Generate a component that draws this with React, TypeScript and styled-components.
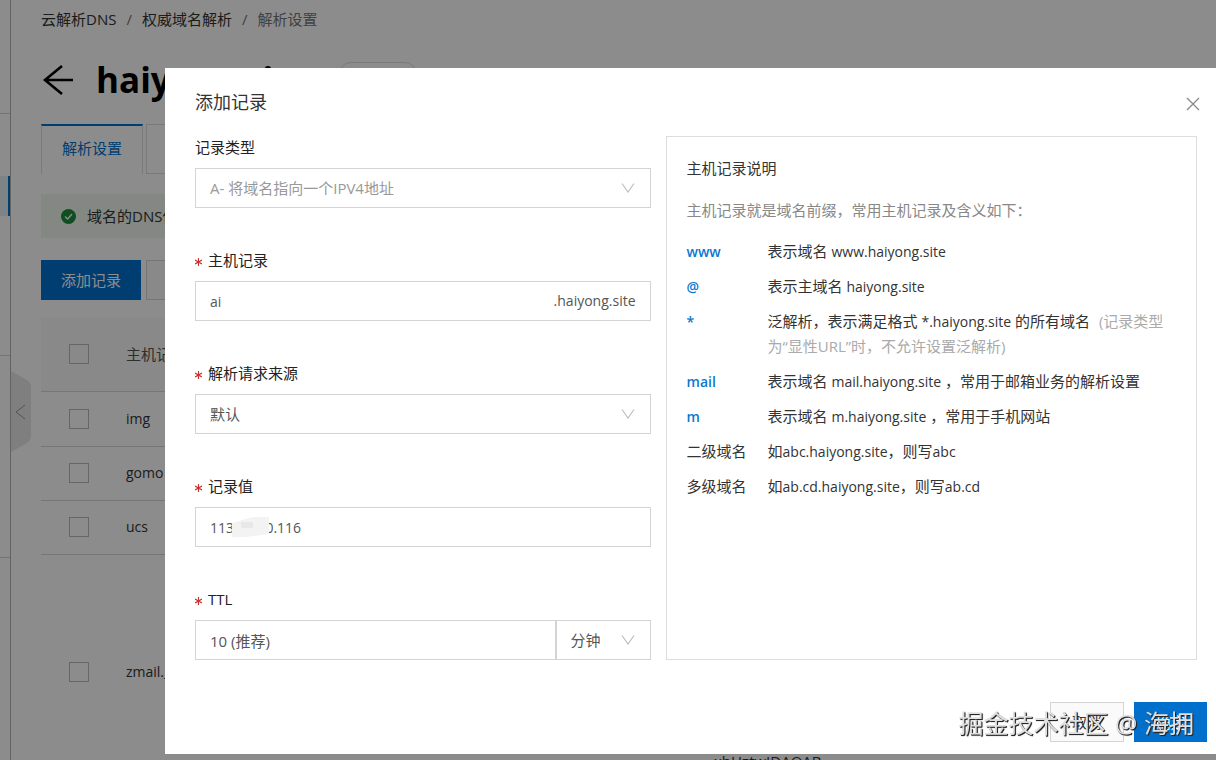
import React from "react";
import styled, { createGlobalStyle } from "styled-components";

const Global = createGlobalStyle`
  *, *::before, *::after { box-sizing: border-box; }
  html, body, #root { height: 100%; }
  body {
    margin: 0;
    overflow: hidden;
    font-family: "Open Sans", "Noto Sans CJK SC", sans-serif;
    font-size: 15px;
    line-height: 24px;
    color: #333;
    background: #fff;
  }
  button, input, select { font: inherit; color: inherit; margin: 0; border-radius: 0; }
  h1, h2, h3, p, dl, dd, dt, ol { margin: 0; padding: 0; font-weight: 400; }
`;

const Shell = styled.div`
  display: flex;
  height: 100%;
  overflow: hidden;
`;

const Rail = styled.nav`
  display: flex;
  flex-direction: column;
  flex: none;
  width: 11px;
  border-right: 1px solid #b4b4b4;
`;

const RailGroup = styled.div<{ $h: number }>`
  flex: none;
  height: ${(p) => p.$h}px;
  padding-top: 62px;
  border-bottom: 1px solid #d4d4d4;
`;

const RailActive = styled.div`
  height: 40px;
  background: #e6eff5;
  border-right: 2px solid #0070cc;
`;

const Collapse = styled.button`
  position: absolute;
  left: 11px;
  top: 371px;
  width: 20px;
  height: 81px;
  padding: 0;
  border: 0;
  background: none;
  svg { display: block; }
`;

const Page = styled.main`
  flex: 1;
  min-width: 0;
  padding: 7px 24px 0 30px;
`;

const Crumbs = styled.ol`
  display: flex;
  gap: 10px;
  list-style: none;
  color: #777;
  a { color: #333; text-decoration: none; }
`;

const TitleRow = styled.header`
  display: flex;
  align-items: center;
  gap: 20px;
  height: 93px;
  padding-top: 5px;
  color: #000;
`;

const Back = styled.button`
  padding: 0;
  border: 0;
  background: none;
  width: 35px;
  svg { display: block; }
`;

const Title = styled.h1`
  font-size: 35px;
  font-weight: 700;
  line-height: 48px;
`;

const Pill = styled.span`
  margin-left: 10px;
  width: 78px;
  height: 36px;
  border: 1px solid #ddd;
  border-radius: 12px;
`;

const Tabs = styled.div`
  display: flex;
  gap: 3px;
`;

const Tab = styled.button<{ $on?: boolean }>`
  width: 102px;
  height: 50px;
  padding: 0 0 4px;
  background: #fff;
  border: 1px solid #dedede;
  ${(p) => p.$on && "border-top: 2px solid #0070cc; border-bottom: 0; color: #0070cc;"}
`;

const Notice = styled.div`
  display: flex;
  align-items: center;
  gap: 11px;
  height: 44px;
  margin-top: 20px;
  padding-left: 20px;
  background: #eef7ee;
`;

const Actions = styled.div`
  display: flex;
  gap: 5px;
  margin: 22px 0 17px;
`;

const Button = styled.button<{ $primary?: boolean; $w: number }>`
  width: ${(p) => p.$w}px;
  height: 40px;
  padding: 0;
  border: 1px solid ${(p) => (p.$primary ? "#0070cc" : "#d4d4d4")};
  background: ${(p) => (p.$primary ? "#0070cc" : "#fafafa")};
  color: ${(p) => (p.$primary ? "#fff" : "#333")};
`;

const Records = styled.table`
  width: 100%;
  border-collapse: collapse;
  table-layout: fixed;
  th { background: #f9f9f9; font-weight: 400; text-align: left; color: #555; }
  th, td { padding: 0; border-bottom: 1px solid #d8d8d8; }
`;

const CheckCol = styled.col`
  width: 85px;
`;

const NameCol = styled.col`
  width: 588px;
`;

const Row = styled.tr<{ $h: number }>`
  height: ${(p) => p.$h}px;
`;

const NameCell = styled.td`
  font-size: 14px;
`;

const ValueCell = styled.td`
  vertical-align: bottom;
`;

const KeyTail = styled.span`
  display: block;
  padding-bottom: 16px;
`;

const Tick = styled.input`
  appearance: none;
  display: block;
  width: 20px;
  height: 20px;
  margin: 0 0 0 28px;
  border: 1px solid #bbb;
`;

const Mask = styled.div`
  position: fixed;
  inset: 0;
  background: rgba(0, 0, 0, 0.45);
`;

const Dialog = styled.section`
  position: fixed;
  top: 68px;
  left: 165px;
  right: 0;
  padding: 22px 9px 12px 30px;
  background: #fff;
`;

const DialogHead = styled.header`
  display: flex;
  justify-content: space-between;
  align-items: center;
  height: 24px;
  margin-bottom: 22px;
  h2 { font-size: 18px; }
`;

const Close = styled.button`
  padding: 3px 7px 0 0;
  border: 0;
  background: none;
  svg { display: block; }
`;

const Columns = styled.div`
  display: grid;
  grid-template-columns: minmax(0, 6fr) minmax(0, 7fr);
  gap: 15px;
  padding-right: 10px;
`;

const Form = styled.form`
  display: flex;
  flex-direction: column;
  gap: 41px;
`;

const Field = styled.div`
  display: flex;
  flex-direction: column;
  gap: 10px;
`;

const Label = styled.label`
  display: flex;
  align-items: center;
  gap: 6px;
  height: 22px;
  line-height: 22px;
  color: #222;
`;

const Star = styled.span`
  display: flex;
  width: 7px;
  padding-top: 4px;
`;

const Box = styled.div<{ $muted?: boolean; $latin?: boolean }>`
  position: relative;
  display: flex;
  align-items: center;
  height: 40px;
  border: 1px solid #d4d4d4;
  font-size: ${(p) => (p.$latin ? 14 : 15)}px;
  color: ${(p) => (p.$muted ? "#999" : "#555")};
  input, select {
    flex: 1;
    min-width: 0;
    width: 100%;
    height: 38px;
    padding: 0 14px;
    border: 0;
    outline: 0;
    background: none;
    appearance: none;
    opacity: 1;
  }
  > svg { position: absolute; right: 15px; pointer-events: none; }
`;

const Suffix = styled.span`
  padding-right: 14px;
`;

const Smudge = styled.svg`
  && { left: 35px; right: auto; top: 8px; }
`;

const Split = styled.div`
  display: grid;
  grid-template-columns: 1fr 95px;
`;

const Help = styled.aside`
  padding: 19px 20px;
  border: 1px solid #ddd;
  h3 { font-size: 15px; }
`;

const Intro = styled.p`
  margin: 18px 0 17px;
  color: #888;
`;

const Terms = styled.dl`
  display: grid;
  grid-template-columns: 81px 1fr;
  row-gap: 10px;
  line-height: 25px;
`;

const Term = styled.dt<{ $code?: boolean }>`
  ${(p) => p.$code && "color: #0a78d0; font-size: 14px; font-weight: 600;"}
`;

const Host = styled.span`
  font-size: 14px;
`;

const Hint = styled.span`
  color: #aaa;
  margin-left: 5px;
`;

const Foot = styled.footer`
  display: flex;
  justify-content: flex-end;
  gap: 10px;
  margin-top: 42px;
`;

const Watermark = styled.div`
  position: fixed;
  right: 22px;
  bottom: 19px;
  font-size: 25px;
  line-height: 36px;
  white-space: nowrap;
  color: #e0e0e0;
  text-shadow: 1px 1px 1px #222, 1px 1px 0 #444;
  pointer-events: none;
`;

const Chevron = () => (
  <svg width="14" height="10" viewBox="0 0 14 10" fill="none" stroke="#bbb" strokeWidth="1.1" aria-hidden="true">
    <path d="M1 0.5 7 9 13 0.5" />
  </svg>
);

const Required = () => (
  <Star aria-hidden="true">
    <svg width="7" height="8" viewBox="0 0 7 8" stroke="#c9302c" strokeWidth="1.1">
      <path d="M3.5 0V8M0 2 7 6M0 6 7 2" />
    </svg>
  </Star>
);

const terms: { term: string; code?: boolean; text: React.ReactNode }[] = [
  { term: "www", code: true, text: <>表示域名 <Host>www.haiyong.site</Host></> },
  { term: "@", code: true, text: <>表示主域名 <Host>haiyong.site</Host></> },
  {
    term: "*",
    code: true,
    text: (
      <>
        泛解析，表示满足格式 <Host>*.haiyong.site</Host> 的所有域名 <Hint>(记录类型为“显性URL”时，不允许设置泛解析)</Hint>
      </>
    ),
  },
  { term: "mail", code: true, text: <>表示域名 <Host>mail.haiyong.site</Host> ，常用于邮箱业务的解析设置</> },
  { term: "m", code: true, text: <>表示域名 <Host>m.haiyong.site</Host> ，常用于手机网站</> },
  { term: "二级域名", text: <>如<Host>abc.haiyong.site</Host>，则写<Host>abc</Host></> },
  { term: "多级域名", text: <>如<Host>ab.cd.haiyong.site</Host>，则写<Host>ab.cd</Host></> },
];

const records = [
  { name: "img", h: 55 },
  { name: "gomo", h: 54 },
  { name: "ucs", h: 54 },
  { name: "zmail._domainkey", h: 235, value: "xhHztwIDAQAB" },
];

export default function App() {
  return (
    <>
      <Global />
      <Shell>
        <Rail aria-label="侧边导航">
          <RailGroup $h={114} />
          <RailGroup $h={242}>
            <RailActive />
          </RailGroup>
          <RailGroup $h={202} />
        </Rail>
        <Collapse aria-label="收起">
          <svg width="20" height="81" viewBox="0 0 20 81">
            <path d="M0 0 16 9Q20 12 20 16V64Q20 69 16 72L0 81Z" fill="#e7e7e7" />
            <path d="M14 34 5 41 14 48" fill="none" stroke="#999" />
          </svg>
        </Collapse>
        <Page>
          <Crumbs>
            <li><a href="#dns">云解析DNS</a></li>
            <li>/</li>
            <li><a href="#domains">权威域名解析</a></li>
            <li>/</li>
            <li>解析设置</li>
          </Crumbs>
          <TitleRow>
            <Back aria-label="返回">
              <svg width="35" height="30" viewBox="0 0 35 30" fill="none" stroke="#000" strokeWidth="2.6">
                <path d="M21 1 4 15 21 29M4 15H32" />
              </svg>
            </Back>
            <Title>haiyong.site</Title>
            <Pill />
          </TitleRow>
          <Tabs>
            <Tab $on>解析设置</Tab>
            <Tab />
          </Tabs>
          <Notice>
            <svg width="15" height="15" viewBox="0 0 15 15">
              <circle cx="7.5" cy="7.5" r="7.5" fill="#1e8e3e" />
              <path d="M4 7.6 6.6 10 11 5" fill="none" stroke="#fff" strokeWidth="1.3" />
            </svg>
            域名的DNS使用正常
          </Notice>
          <Actions>
            <Button $primary $w={100}>添加记录</Button>
            <Button $w={100} />
          </Actions>
          <Records>
            <colgroup>
              <CheckCol />
              <NameCol />
              <col />
            </colgroup>
            <thead>
              <Row $h={74}>
                <th><Tick type="checkbox" aria-label="全选" /></th>
                <th>主机记录</th>
                <th />
              </Row>
            </thead>
            <tbody>
              {records.map((r) => (
                <Row key={r.name} $h={r.h}>
                  <td><Tick type="checkbox" aria-label={r.name} /></td>
                  <NameCell>{r.name}</NameCell>
                  <ValueCell>{r.value && <KeyTail>{r.value}</KeyTail>}</ValueCell>
                </Row>
              ))}
            </tbody>
          </Records>
        </Page>
      </Shell>
      <Mask />
      <Dialog role="dialog" aria-labelledby="dialog-title">
        <DialogHead>
          <h2 id="dialog-title">添加记录</h2>
          <Close aria-label="关闭">
            <svg width="14" height="14" viewBox="0 0 14 14" stroke="#888" strokeWidth="1.3">
              <path d="M1 1 13 13M13 1 1 13" />
            </svg>
          </Close>
        </DialogHead>
        <Columns>
          <Form>
            <Field>
              <Label htmlFor="type">记录类型</Label>
              <Box $muted>
                <select id="type"><option>A- 将域名指向一个IPV4地址</option></select>
                <Chevron />
              </Box>
            </Field>
            <Field>
              <Label htmlFor="host"><Required />主机记录</Label>
              <Box $latin>
                <input id="host" defaultValue="ai" />
                <Suffix>.haiyong.site</Suffix>
              </Box>
            </Field>
            <Field>
              <Label htmlFor="line"><Required />解析请求来源</Label>
              <Box>
                <select id="line"><option>默认</option></select>
                <Chevron />
              </Box>
            </Field>
            <Field>
              <Label htmlFor="value"><Required />记录值</Label>
              <Box $latin>
                <input id="value" defaultValue="113.00.00.116" />
                <Smudge width="38" height="22" viewBox="0 0 38 22" aria-hidden="true">
                  <path d="M1 7 22 1H38V18L22 20Q12 22 1 21Z" fill="#f3f3f3" />
                  <path d="M10 6H22V12H10Z" fill="#e8e8e8" />
                </Smudge>
              </Box>
            </Field>
            <Field>
              <Label htmlFor="ttl"><Required />TTL</Label>
              <Split>
                <Box><input id="ttl" defaultValue="10 (推荐)" /></Box>
                <Box>
                  <select aria-label="时间单位"><option>分钟</option></select>
                  <Chevron />
                </Box>
              </Split>
            </Field>
          </Form>
          <Help>
            <h3>主机记录说明</h3>
            <Intro>主机记录就是域名前缀，常用主机记录及含义如下：</Intro>
            <Terms>
              {terms.map((t) => (
                <React.Fragment key={t.term}>
                  <Term $code={t.code}>{t.term}</Term>
                  <dd>{t.text}</dd>
                </React.Fragment>
              ))}
            </Terms>
          </Help>
        </Columns>
        <Foot>
          <Button $w={74}>取消</Button>
          <Button $primary $w={73}>确定</Button>
        </Foot>
      </Dialog>
      <Watermark>掘金技术社区 @ 海拥</Watermark>
    </>
  );
}
